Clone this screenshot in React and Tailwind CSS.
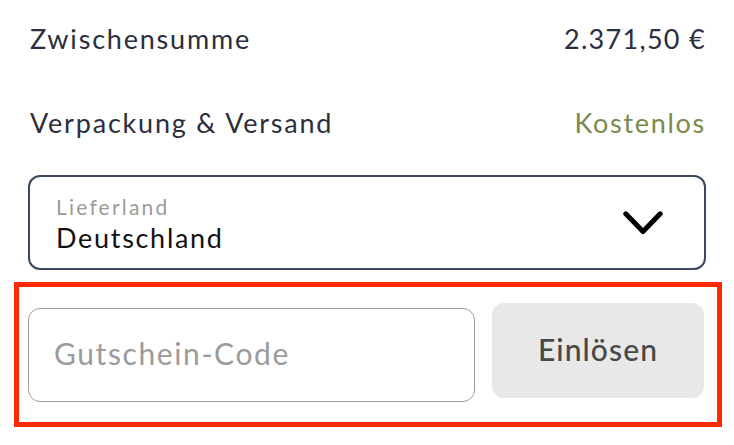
export default function App() {
  return (
    <div className="w-[734px] h-[445px] bg-white overflow-hidden" style={{ fontFamily: "Lato, 'Noto Sans', sans-serif" }}>
      <div className="px-[28px] pt-[19px]">
        <div className="flex justify-between text-[27px] leading-[40px] text-[#2c2e3d]">
          <span className="pl-[2px] tracking-[1.8px]">Zwischensumme</span>
          <span className="tracking-[1.3px] pr-[0px]">2.371,50 €</span>
        </div>
        <div className="mt-[44px] flex justify-between text-[27px] leading-[40px]">
          <span className="pl-[2px] text-[#2c2e3d] tracking-[1.8px]">Verpackung &amp; Versand</span>
          <span className="text-[#7b8a4b] tracking-[1.7px] pr-[0px]">Kostenlos</span>
        </div>
        <div className="mt-[32px] h-[95px] border-2 border-[#3a475c] rounded-[12px] flex items-center justify-between pl-[26px] pr-[41px]">
          <div className="flex flex-col self-start pt-[18px]">
            <span className="text-[21px] leading-[24px] text-[#9b9b9b] tracking-[2.2px]">Lieferland</span>
            <span className="mt-[3px] text-[27px] leading-[32px] text-[#111111] tracking-[1.7px]">Deutschland</span>
          </div>
          <svg width="40" height="24" viewBox="0 0 40 24" fill="none">
            <path d="M2.8 2.8 L20 20.5 L37.2 2.8" stroke="#000" strokeWidth="5" strokeLinecap="round" strokeLinejoin="round" />
          </svg>
        </div>
        <div className="mt-[12px] -ml-[14px] -mr-[16px] border-[5px] border-[#ff2a00] pl-[9px] pr-[11px] pt-[16px] pb-[20px] flex items-start gap-[17px]">
          <input
            type="text"
            placeholder="Gutschein-Code"
            className="mt-[5px] w-[447px] h-[94px] border-[1.5px] border-[#9e9e9e] rounded-[12px] pl-[25px] pb-[4px] text-[30px] tracking-[1.6px] text-[#333] placeholder:text-[#9b9b9b] outline-none"
            style={{ fontFamily: "Lato, 'Noto Sans', sans-serif" }}
          />
          <button
            className="w-[212px] h-[95px] bg-[#e8e8e8] rounded-[12px] pb-[2px] text-[30px] font-medium tracking-[1.1px] text-[#474747]"
            style={{ fontFamily: "Lato, 'Noto Sans', sans-serif" }}
          >
            Einlösen
          </button>
        </div>
      </div>
    </div>
  );
}
